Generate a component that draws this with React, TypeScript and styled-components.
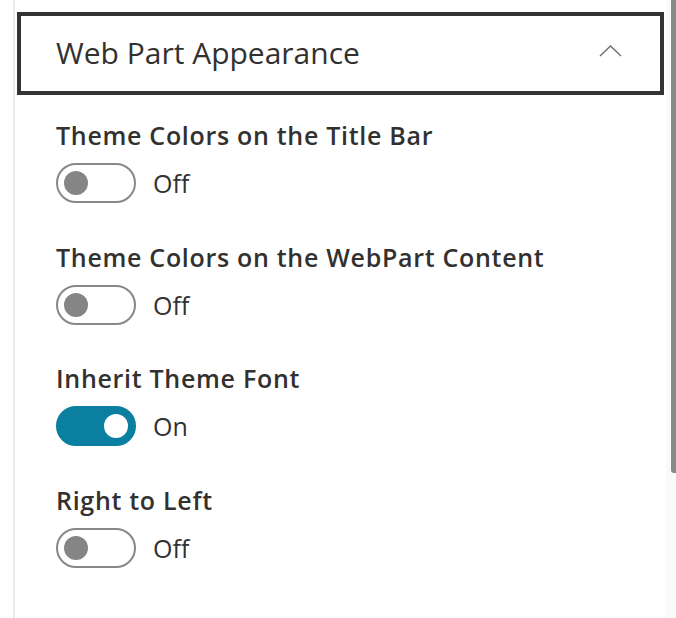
import React from "react";
import styled, { createGlobalStyle } from "styled-components";

const GlobalStyle = createGlobalStyle`
  html, body {
    margin: 0;
    padding: 0;
    background: #ffffff;
  }
  body {
    font-family: "Open Sans", "Noto Sans", "Liberation Sans", sans-serif;
    color: #323130;
  }
`;

const Page = styled.div`
  display: flex;
  width: 676px;
  height: 618px;
  overflow: hidden;
  background: #ffffff;
`;

const Panel = styled.div`
  flex: 1;
  margin-left: 13px;
  border-left: 2px solid #ebebeb;
  padding: 12px 2px 0 2px;
  display: flex;
  flex-direction: column;
`;

const Header = styled.button`
  height: 83px;
  box-sizing: border-box;
  border: 4px solid #333333;
  background: #ffffff;
  display: flex;
  align-items: center;
  justify-content: space-between;
  padding: 0 38px 2px 35px;
  font-family: inherit;
  cursor: pointer;
`;

const HeaderTitle = styled.span`
  font-size: 30px;
  font-weight: 400;
  color: #323130;
`;

const Chevron = styled.svg`
  width: 23px;
  height: 12px;
  margin-bottom: 4px;
`;

const Sections = styled.div`
  display: flex;
  flex-direction: column;
  gap: 37.5px;
  padding: 24px 0 0 39px;
`;

const Section = styled.div`
  display: flex;
  flex-direction: column;
  gap: 12px;
`;

const Label = styled.div`
  font-size: 25px;
  line-height: 32px;
  font-weight: 600;
  letter-spacing: 0.7px;
  color: #323130;
`;

const ToggleRow = styled.div`
  display: flex;
  align-items: center;
  gap: 17px;
`;

const Track = styled.div<{ $on: boolean }>`
  width: 80px;
  height: 40px;
  box-sizing: border-box;
  border-radius: 20px;
  border: 2px solid ${(p) => (p.$on ? "#0a7fa0" : "#8a8886")};
  background: ${(p) => (p.$on ? "#0a7fa0" : "#ffffff")};
  display: flex;
  align-items: center;
  justify-content: ${(p) => (p.$on ? "flex-end" : "flex-start")};
  padding: 0 6px;
`;

const Knob = styled.div<{ $on: boolean }>`
  width: 24px;
  height: 24px;
  border-radius: 50%;
  background: ${(p) => (p.$on ? "#ffffff" : "#858585")};
`;

const StateText = styled.span`
  font-size: 25px;
  font-weight: 400;
  color: #323130;
  line-height: 40px;
`;

const Scrollbar = styled.div`
  width: 10px;
  display: flex;
  justify-content: flex-end;
  background: #fafafa;
`;

const Thumb = styled.div`
  width: 5px;
  height: 473px;
  background: #8a8a8a;
  border-bottom-left-radius: 3px;
`;

const settings = [
  { label: "Theme Colors on the Title Bar", on: false },
  { label: "Theme Colors on the WebPart Content", on: false },
  { label: "Inherit Theme Font", on: true },
  { label: "Right to Left", on: false },
];

export default function App() {
  return (
    <>
      <GlobalStyle />
      <Page>
        <Panel>
          <Header>
            <HeaderTitle>Web Part Appearance</HeaderTitle>
            <Chevron viewBox="0 0 23 12">
              <polyline
                points="1,11 11.5,1 22,11"
                fill="none"
                stroke="#6e6e6e"
                strokeWidth="1.4"
              />
            </Chevron>
          </Header>
          <Sections>
            {settings.map((s) => (
              <Section key={s.label}>
                <Label>{s.label}</Label>
                <ToggleRow>
                  <Track $on={s.on}>
                    <Knob $on={s.on} />
                  </Track>
                  <StateText>{s.on ? "On" : "Off"}</StateText>
                </ToggleRow>
              </Section>
            ))}
          </Sections>
        </Panel>
        <Scrollbar>
          <Thumb />
        </Scrollbar>
      </Page>
    </>
  );
}
